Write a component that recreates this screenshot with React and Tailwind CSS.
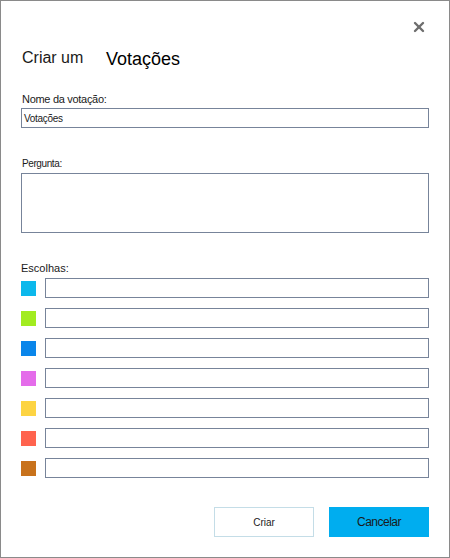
import { X } from 'lucide-react'

const swatches = ['#0cb8ec', '#a2ec20', '#0a86ea', '#e46cea', '#fdd443', '#ff634e', '#c8721c']

function Field({ className = '' }) {
  return <div className={`border border-[#77849a] bg-white ${className}`} />
}

export default function App() {
  return (
    <div className="w-[450px] h-[558px] border border-[#8a8a8a] bg-white px-[20px] font-['Liberation_Sans',Arial,sans-serif] text-[#1a1a1a] flex flex-col">
      <div className="flex justify-end pt-[18px] pr-[2px]">
        <X size={16} strokeWidth={3.6} className="text-[#6e6e6e]" />
      </div>
      <div className="flex items-start mt-[13px] h-[20px] pl-[1px]">
        <span className="text-[16px] leading-[20px] w-[84px]">Criar um</span>
        <span className="text-[18px] leading-[20px] mt-[1px] text-black">Votações</span>
      </div>
      <label className="block text-[11px] leading-[14px] tracking-[-0.3px] mt-[24px] pl-[1px]">Nome da votação:</label>
      <div className="mt-[2px] h-[20px] border border-[#77849a] flex items-center px-[2px] text-[10px] tracking-[-0.3px]">Votações</div>
      <label className="block text-[10px] leading-[12px] tracking-[-0.4px] mt-[30px] pl-[1px]">Pergunta:</label>
      <Field className="mt-[3px] h-[60px] shrink-0" />
      <label className="block text-[11px] leading-[13px] mt-[29px]">Escolhas:</label>
      <div className="flex flex-col gap-[10px] mt-[3px]">
        {swatches.map((c) => (
          <div key={c} className="flex items-center gap-[9px]">
            <div className="w-[15px] h-[15px] shrink-0" style={{ backgroundColor: c }} />
            <Field className="flex-1 h-[20px]" />
          </div>
        ))}
      </div>
      <div className="flex justify-end gap-[15px] mt-[29px]">
        <button className="w-[100px] h-[30px] border border-[#c4dde7] bg-white text-[10px] text-[#1a1a1a]">Criar</button>
        <button className="w-[100px] h-[30px] bg-[#00adef] text-[12px] tracking-[-0.5px] text-[#1a1a1a]">Cancelar</button>
      </div>
    </div>
  )
}
